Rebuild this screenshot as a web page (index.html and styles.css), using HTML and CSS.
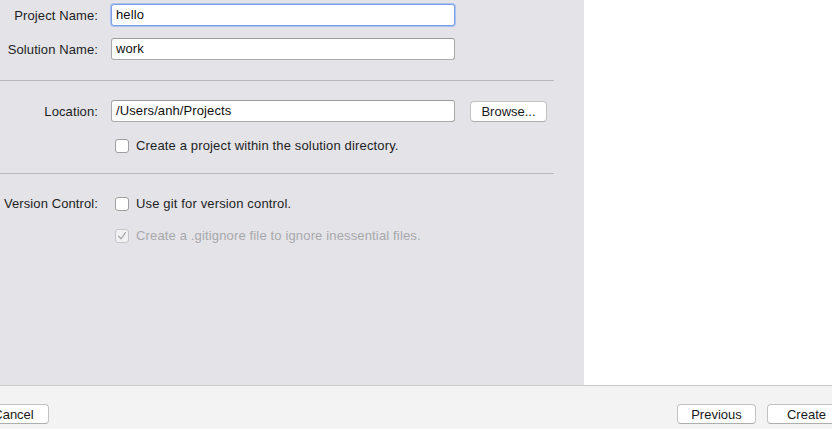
FILE: index.html
```html
<!DOCTYPE html>
<html>
<head>
<meta charset="utf-8">
<link rel="stylesheet" href="styles.css">
</head>
<body>
<div class="window">
  <div class="content">
    <div class="panel">
      <div class="row row-first">
        <label class="label">Project Name:</label>
        <div class="field focused">hello</div>
      </div>
      <div class="row row-second">
        <label class="label">Solution Name:</label>
        <div class="field">work</div>
      </div>
      <div class="sep sep-one"></div>
      <div class="row row-location">
        <label class="label">Location:</label>
        <div class="field">/Users/anh/Projects</div>
        <button class="btn browse">Browse...</button>
      </div>
      <div class="row row-check1">
        <span class="label"></span>
        <span class="check"></span>
        <span class="check-text">Create a project within the solution directory.</span>
      </div>
      <div class="sep sep-two"></div>
      <div class="row row-vc">
        <label class="label">Version Control:</label>
        <span class="check"></span>
        <span class="check-text">Use git for version control.</span>
      </div>
      <div class="row row-ignore">
        <span class="label"></span>
        <span class="check disabled">
          <svg width="10" height="10" viewBox="0 0 10 10"><path d="M1.6 5.2 L4 7.8 L8.4 1.6" fill="none" stroke="#a9a9a9" stroke-width="1.3" stroke-linecap="round" stroke-linejoin="round"/></svg>
        </span>
        <span class="check-text disabled-text">Create a .gitignore file to ignore inessential files.</span>
      </div>
    </div>
    <div class="preview"></div>
  </div>
  <div class="footer">
    <button class="btn cancel">Cancel</button>
    <div class="footer-right">
      <button class="btn fbtn">Previous</button>
      <button class="btn fbtn create">Create</button>
    </div>
  </div>
</div>
</body>
</html>
```
FILE: styles.css
```css
html, body {
  margin: 0;
  padding: 0;
  width: 832px;
  height: 429px;
  overflow: hidden;
  font-family: "Liberation Sans", Arial, sans-serif;
  font-size: 13px;
  color: #1a1a1a;
}
.window {
  display: flex;
  flex-direction: column;
  height: 429px;
}
.content {
  display: flex;
  height: 385px;
}
.panel {
  width: 584px;
  background: #e3e3e8;
  padding-top: 4px;
  box-sizing: border-box;
}
.preview {
  flex: 1;
  background: #ffffff;
}
.row {
  display: flex;
  align-items: center;
}
.label {
  width: 98px;
  text-align: right;
  flex-shrink: 0;
  margin-right: 13px;
  color: #1e1e1e;
  letter-spacing: 0.1px;
}
.field {
  width: 344px;
  height: 22px;
  box-sizing: border-box;
  background: #fff;
  border: 1px solid #a9a9a9;
  border-top-color: #9a9a9a;
  border-radius: 3px;
  padding: 0 0 0 4px;
  line-height: 20px;
  color: #111;
  font-size: 13px;
  letter-spacing: 0.1px;
}
.field.focused {
  border: 1px solid #7c9ee6;
  box-shadow: 0 0 0 1px #a9c2f0;
}
.row-second { margin-top: 12px; }
.sep {
  width: 554px;
  height: 1px;
  background: #b9b9bd;
}
.sep-one { margin-top: 20px; }
.row-location { margin-top: 19px; }
.btn {
  font-family: "Liberation Sans", Arial, sans-serif;
  font-size: 13px;
  color: #1a1a1a;
  background: #ffffff;
  border: 1px solid #c2c2c2;
  border-bottom-color: #aeaeae;
  border-radius: 4px;
  height: 21px;
  padding: 0;
  box-sizing: border-box;
  line-height: 19px;
}
.browse {
  width: 77px;
  margin-left: 15px;
}
.check {
  width: 14px;
  height: 14px;
  box-sizing: border-box;
  border: 1px solid #9f9f9f;
  border-radius: 3px;
  background: #fff;
  margin-left: 4px;
  flex-shrink: 0;
  display: flex;
  align-items: center;
  justify-content: center;
}
.check.disabled {
  border-color: #c6c6c9;
  background: #f1f1f3;
}
.check-text {
  margin-left: 7px;
  color: #1e1e1e;
  letter-spacing: 0.15px;
}
.disabled-text { color: #a8a8ab; }
.row-check1 { margin-top: 16px; }
.sep-two { margin-top: 20px; }
.row-vc { margin-top: 22px; }
.row-ignore { margin-top: 17px; }
.footer {
  flex: 1;
  background: #f3f3f3;
  border-top: 1px solid #cacaca;
  display: flex;
  align-items: flex-start;
  justify-content: space-between;
  padding-top: 18px;
  box-sizing: border-box;
}
.cancel {
  width: 71px;
  margin-left: -22px;
  height: 20px;
}
.footer-right {
  display: flex;
  gap: 11px;
  margin-right: -14px;
}
.fbtn {
  width: 79px;
  height: 20px;
}
```
